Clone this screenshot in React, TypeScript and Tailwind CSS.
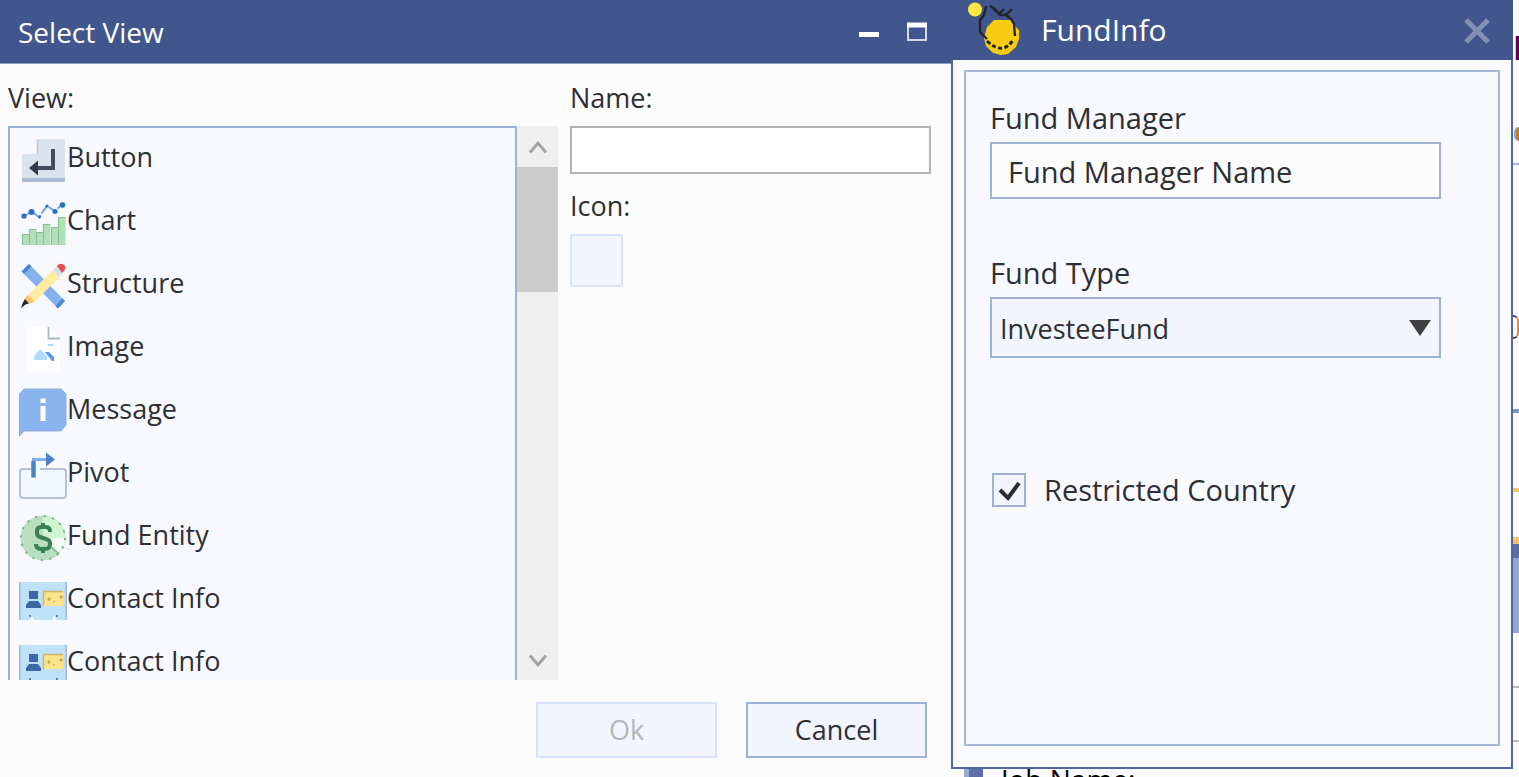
import { useState, type ReactNode } from "react";

function ButtonIcon() {
  return (
    <svg viewBox="0 0 48 48" className="size-12" aria-hidden="true">
      <path d="M3 18h15V3h28v40H3z" fill="#dae4ef" />
      <path d="M18.500 4v13.500" stroke="#b9c6d6" strokeWidth="1.500" />
      <path d="M3 42h43v4H3z" fill="#a9bad2" />
      <path d="M34 13v19H16" fill="none" stroke="#434c5c" strokeWidth="4" />
      <path d="M10 32L19 24.500v15z" fill="#333c4c" />
    </svg>
  );
}

function ChartIcon() {
  const bars: [number, number][] = [
    [3, 35], [10, 30], [17, 33], [24, 25], [32, 28], [39, 18],
  ];
  return (
    <svg viewBox="0 0 48 48" className="size-12" aria-hidden="true">
      {bars.map(([x, y]) => (
        <g key={x}>
          <rect x={x} y={y} width="7.500" height={46 - y} fill="#b3dfb7" />
          <path d={`M${x + 0.5} 46V${y + 0.5}h7`} fill="none" stroke="#8cbf9d" strokeWidth="1.200" />
        </g>
      ))}
      <path d="M5 17L13 13 20 18 28 7 36 12 43 5.500" fill="none" stroke="#6f9fdc" strokeWidth="1.800" strokeDasharray="9 2" />
      <g fill="#2b6cc4">
        <circle cx="5" cy="17" r="2.600" />
        <circle cx="12.500" cy="13" r="3" />
        <circle cx="20.500" cy="18" r="1.600" />
        <circle cx="28" cy="7" r="1.600" />
        <circle cx="36" cy="12.500" r="2.500" />
        <circle cx="43.500" cy="6" r="2.800" />
      </g>
    </svg>
  );
}

function StructureIcon() {
  return (
    <svg viewBox="0 0 48 48" className="size-12" aria-hidden="true">
      <path d="M10 2L46 39l-7 7.500L2.500 9.500z" fill="#83b2ef" />
      <path d="M10 2l2.500 2.500L5 12 2.500 9.500zM43.500 36.500l2.500 2.500-7 7.500-2.500-2.500z" fill="#4a86d2" />
      <path d="M34 8l7 7L14 41l-7-6z" fill="#ffec9c" />
      <path d="M9 33l6.500 6.500-5 2-5-4.500z" fill="#ffc36b" />
      <path d="M34 8l4-4 6 6-4 5z" fill="#d5e3f0" />
      <path d="M38 4q3-3.500 6.500-1.500T45 9l-2 2z" fill="#e8504f" />
      <path d="M6 37l4 4.500-3.500 1L2 46l1.500-4.500z" fill="#26282b" />
    </svg>
  );
}

function ImageIcon() {
  return (
    <svg viewBox="0 0 48 48" className="size-12" aria-hidden="true">
      <path d="M8 2h22l11 11v33H8z" fill="#fff" />
      <path d="M29.500 2v11.500H41" fill="none" stroke="#a9b8c6" strokeWidth="1.800" />
      <path d="M15 35v-4l6-7 7 7v4z" fill="#b2dcff" />
      <path d="M26 27h4l5 5v4h-2z" fill="#5b96e8" />
      <path d="M29 19h5v2h-5z" fill="#a8d8ff" />
    </svg>
  );
}

function MessageIcon() {
  return (
    <svg viewBox="0 0 48 48" className="size-12" aria-hidden="true">
      <path d="M5 1h37l5 5v31l-5 6H5l-4.500 5V6z" fill="#8ab4ee" stroke="#8fadd8" />
      <path d="M21.500 10.500h5V15h-5zM21.500 18h5v15h-5z" fill="#fff" />
    </svg>
  );
}

function PivotIcon() {
  return (
    <svg viewBox="0 0 48 48" className="size-12" aria-hidden="true">
      <rect x="1" y="18" width="46" height="29" rx="3" fill="#eff9ff" stroke="#b3c2d4" strokeWidth="2" />
      <path d="M12 16h9v3h-9z" fill="#eff9ff" />
      <path d="M14.500 26V8.500H29" fill="none" stroke="#7fb1ed" strokeWidth="3" />
      <path d="M14.500 26.500V10" stroke="#4b83cb" strokeWidth="4.500" />
      <path d="M27 1.500l9 7-9 7z" fill="#4b83cb" />
    </svg>
  );
}

function FundIcon() {
  return (
    <svg viewBox="0 0 48 48" className="size-12" aria-hidden="true">
      <circle cx="24" cy="24" r="22.500" fill="#badfbe" />
      <path d="M24 24V2a22 22 0 0 1 22 22z" fill="#d0f6d1" />
      <path d="M24 24h22a22 22 0 0 1-6 15z" fill="#f3fdf3" />
      <circle cx="24" cy="24" r="22" fill="none" stroke="#73b48c" strokeWidth="2" strokeDasharray="2.200 6.440" />
      <path d="M31 18q0-5-4-5h-5q-4 0-4 4v2q0 3 3 4l6 2q4 1 4 4v1q0 5-5 5h-4q-5 0-5-5" fill="none" stroke="#3a8055" strokeWidth="4" />
      <path d="M24 9v4M24 35v4" stroke="#3a8055" strokeWidth="4" />
      <path d="M32 33l8 7" stroke="#73b48c" strokeWidth="1.500" />
    </svg>
  );
}

function ContactIcon() {
  return (
    <svg viewBox="0 0 48 48" className="size-12" aria-hidden="true">
      <path d="M0 5h48v38H0z" fill="#bfe2f8" />
      <path d="M.8 5v38M47.200 5v38" stroke="#a5b9dd" strokeWidth="1.600" />
      <path d="M10 14h9v8h-9zM7 31v-3l3-4h9l3 4v3z" fill="#3b69a8" />
      <path d="M24 14h20v15H24z" fill="#fbe38c" />
      <path d="M24.500 29V14.500H44" fill="none" stroke="#d3b565" strokeWidth="1.500" />
      <path d="M29 21h2v2h-2zM34 25l2-1M41 19h2v2h-2z" fill="#ad9457" stroke="#c9ab5b" />
      <path d="M10 38h2v2h-2zM37 38h2v2h-2z" fill="#5c80bd" />
      <path d="M11 43l2-4 2 4zM33 43l2-4 3 4z" fill="#fff" />
    </svg>
  );
}

function FundInfoLogo() {
  return (
    <svg viewBox="0 0 56 56" className="size-14 shrink-0" aria-hidden="true">
      <circle cx="8" cy="7.500" r="7" fill="#ffe640" />
      <path d="M27 18h18l3 6 4 4v9l-3 8-8 7-7 1-8-2-7-7-2-8 3-11z" fill="#f9cb10" />
      <path d="M19 4l-2 9-4 5v12l7 7" fill="none" stroke="#22242c" strokeWidth="2.400" />
      <path d="M23 4l5 3 5 6h6l6-6M33 11l4-4M26 5l3 5M38 12l6 5 3 5 1 12" fill="none" stroke="#22242c" strokeWidth="2.400" />
      <path d="M20 39q16 15 26-1" fill="none" stroke="#22242c" strokeWidth="3" strokeDasharray="4 2.500" />
    </svg>
  );
}

const views: { label: string; icon: ReactNode }[] = [
  { label: "Button", icon: <ButtonIcon /> },
  { label: "Chart", icon: <ChartIcon /> },
  { label: "Structure", icon: <StructureIcon /> },
  { label: "Image", icon: <ImageIcon /> },
  { label: "Message", icon: <MessageIcon /> },
  { label: "Pivot", icon: <PivotIcon /> },
  { label: "Fund Entity", icon: <FundIcon /> },
  { label: "Contact Info", icon: <ContactIcon /> },
  { label: "Contact Info", icon: <ContactIcon /> },
];

function SelectViewDialog() {
  return (
    <section aria-label="Select View" className="flex min-w-0 flex-[951] flex-col bg-[#fcfcfc]">
      <header className="flex h-16 shrink-0 items-center border-b border-[#8fa0c9] bg-[#41568d] pr-[23px] pl-[18px] text-white">
        <h1 className="flex-1 text-[28px] leading-9">Select View</h1>
        <button type="button" aria-label="Minimize" className="mr-[26px]">
          <svg viewBox="0 0 22 22" className="size-[22px]" aria-hidden="true">
            <path d="M1 11h20v5H1z" fill="#fff" />
          </svg>
        </button>
        <button type="button" aria-label="Maximize">
          <svg viewBox="0 0 22 22" className="size-[22px]" aria-hidden="true">
            <path d="M2 4h18v15H2z" fill="none" stroke="#d3d9ea" strokeWidth="2" />
            <path d="M1 1.500h20v5H1z" fill="#fff" />
          </svg>
        </button>
      </header>

      <div className="flex min-h-0 flex-1 gap-3 pt-4 pr-5 pl-2">
        <div className="flex min-h-0 flex-[550] flex-col">
          <h2 id="view-label" className="mb-2.5 h-9 text-[27px] leading-9">View:</h2>
          <div className="flex min-h-0 flex-1">
            <ul aria-labelledby="view-label" className="min-w-0 flex-1 overflow-hidden border-2 border-b-0 border-[#9fb1d6] bg-[#f8f9ff]">
              {views.map((view, i) => (
                <li key={i} className="flex h-[63px] items-center pl-[9px]">
                  {view.icon}
                  <span className="pb-1.5 text-[27px] leading-9">{view.label}</span>
                </li>
              ))}
            </ul>
            <div className="flex w-[41px] flex-col bg-[#efefef]">
              <button type="button" aria-label="Scroll up" className="flex h-[41px] items-center justify-center">
                <svg viewBox="0 0 20 16" className="h-4 w-5" aria-hidden="true">
                  <path d="M2 13.500L10 4l8 9.500" fill="none" stroke="#a3a3a3" strokeWidth="3" />
                </svg>
              </button>
              <div className="h-[125px] bg-[#cbcbcb]" />
              <button type="button" aria-label="Scroll down" className="mt-auto flex h-[41px] items-center justify-center">
                <svg viewBox="0 0 20 16" className="h-4 w-5" aria-hidden="true">
                  <path d="M2 3.500L10 13l8-9.500" fill="none" stroke="#a3a3a3" strokeWidth="3" />
                </svg>
              </button>
            </div>
          </div>
        </div>

        <div className="flex min-w-0 flex-[361] flex-col items-start">
          <label htmlFor="view-name" className="mb-2.5 h-9 text-[27px] leading-9">Name:</label>
          <input id="view-name" type="text" className="h-12 w-full border-2 border-[#b2b2b6] bg-white px-2 text-[27px]" />
          <label htmlFor="view-icon" className="mt-3.5 mb-2.5 h-9 text-[27px] leading-9">Icon:</label>
          <button id="view-icon" type="button" aria-label="Icon" className="size-[53px] border-2 border-[#dae2fa] bg-[#f2f5fe]" />
        </div>
      </div>

      <footer className="flex shrink-0 justify-end gap-[29px] pt-[22px] pr-6 pb-[19px]">
        <button type="button" disabled className="h-14 w-[181px] border-2 border-[#dae2fa] bg-[#f2f5fe] text-[27px] text-[#b3b5ba]">Ok</button>
        <button type="button" className="h-14 w-[181px] border-2 border-[#9fb1d6] bg-[#f2f5fe] text-[27px]">Cancel</button>
      </footer>
    </section>
  );
}

function FundInfoDialog() {
  const [manager, setManager] = useState("Fund Manager Name");
  const [restricted, setRestricted] = useState(true);
  return (
    <section aria-label="FundInfo" className="flex min-h-0 flex-1 flex-col">
      <header className="flex h-[60px] shrink-0 items-center border-r-2 border-[#41568d] bg-[#41568d] pr-5 pl-4 text-white">
        <FundInfoLogo />
        <h1 className="flex-1 pl-[18px] text-[30px] leading-10 font-medium">FundInfo</h1>
        <button type="button" aria-label="Close">
          <svg viewBox="0 0 28 28" className="size-7" aria-hidden="true">
            <path d="M3 4l22 22M25 4L3 26" stroke="#8490b6" strokeWidth="5" />
          </svg>
        </button>
      </header>
      <div className="flex min-h-0 flex-1 border-2 border-t-0 border-[#52669f] bg-[#fafbff] px-[11px] pt-2.5 pb-[21px]">
        <form className="flex flex-1 flex-col border-2 border-[#a5b6d9] bg-[#f8f9ff] pt-7 pr-[57px] pl-6" onSubmit={(e) => e.preventDefault()}>
          <label htmlFor="fund-manager" className="mb-1.5 h-9 text-[29px] leading-9">Fund Manager</label>
          <input
            id="fund-manager"
            type="text"
            value={manager}
            onChange={(e) => setManager(e.target.value)}
            className="h-[57px] w-full border-2 border-[#9fb1d6] bg-[#fcfcfc] px-4 pt-0.5 text-[29px]"
          />
          <label htmlFor="fund-type" className="mt-14 mb-1.5 h-9 text-[29px] leading-9">Fund Type</label>
          <div className="relative">
            <select id="fund-type" className="block h-[61px] w-full appearance-none border-2 border-[#9fb1d6] bg-[#f2f5fe] pt-1 pl-2 text-[27px]">
              <option>InvesteeFund</option>
            </select>
            <svg viewBox="0 0 22 16" className="pointer-events-none absolute top-[23px] right-2.5 h-4 w-[22px]" aria-hidden="true">
              <path d="M0 0h22L11 16z" fill="#3f3f40" />
            </svg>
          </div>
          <label className="mt-28 flex items-center gap-[18px] pl-0.5 text-[29px] leading-10">
            <span className="relative flex">
              <input
                type="checkbox"
                checked={restricted}
                onChange={(e) => setRestricted(e.target.checked)}
                className="size-[34px] appearance-none border-2 border-[#9fb1d6] bg-[#f2f5fe]"
              />
              {restricted && (
                <svg viewBox="0 0 34 34" className="pointer-events-none absolute inset-0 size-[34px]" aria-hidden="true">
                  <path d="M8 17l8 8L27 10" fill="none" stroke="#2b2d31" strokeWidth="4" />
                </svg>
              )}
            </span>
            Restricted Country
          </label>
        </form>
      </div>
    </section>
  );
}

function BackgroundEdge() {
  return (
    <aside aria-hidden="true" className="flex w-1.5 shrink-0 flex-col items-end overflow-hidden bg-[#fcfcff]">
      <div className="mt-9 h-6 w-1 border-l border-[#c8d694] bg-[#670054]" />
      <div className="mt-[67px] h-3.5 w-[5px] rounded-l-full border-l-2 border-[#6cb4ec] bg-[#cf7a18]" />
      <div className="mt-[22px] h-0.5 w-full bg-[#a9b8dc]" />
      <div className="mt-[150px] h-6 w-full rounded-r-full border-2 border-l-0 border-[#43474f] border-r-[#d9902f]" />
      <div className="mt-[70px] h-1 w-full bg-[#7d92c4]" />
      <div className="mt-[75px] h-1 w-full bg-[#fac465]" />
      <div className="mt-[45px] h-[7px] w-full bg-[#fac465]" />
      <div className="h-3.5 w-full bg-[#5b6ca6]" />
      <div className="h-[75px] w-full bg-[#94a5cf]" />
      <div className="mt-[53px] h-0.5 w-full bg-[#b8b8be]" />
      <div className="mt-[52px] h-0.5 w-full bg-[#b8b8be]" />
    </aside>
  );
}

export default function App() {
  return (
    <main className="flex h-screen overflow-hidden bg-[#fcfcfc] font-['Open_Sans','Noto_Sans',sans-serif] text-[#2e2f33]">
      <SelectViewDialog />
      <div className="flex min-w-0 flex-[562] flex-col">
        <FundInfoDialog />
        <div className="flex h-2 shrink-0 items-start overflow-hidden bg-[#fcfcff] pl-[13px]">
          <div className="h-full w-[5px] bg-[#9aa8d2]" />
          <div className="h-full w-3.5 bg-[#5f6fa9]" />
          <span className="pl-[18px] text-[28px] leading-5 font-medium text-black">Job Name:</span>
        </div>
      </div>
      <BackgroundEdge />
    </main>
  );
}
